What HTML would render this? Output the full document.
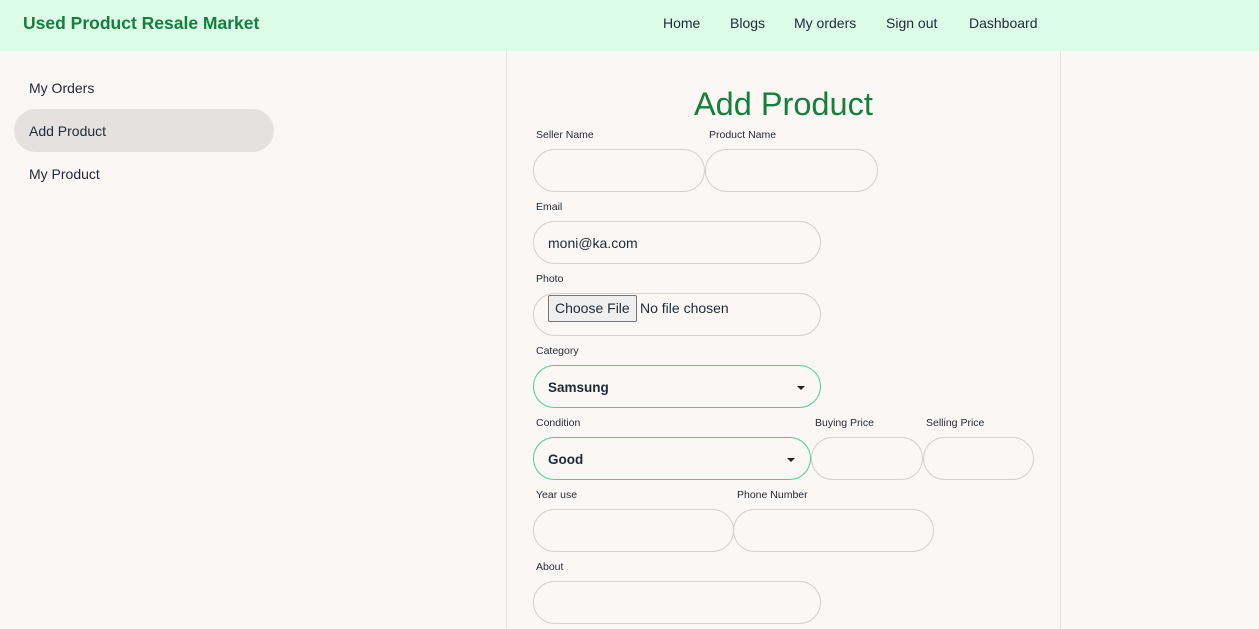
<!DOCTYPE html>
<html><head><style>
*{box-sizing:border-box;margin:0;padding:0}
body{width:1259px;height:629px;overflow:hidden;background:#faf7f5;font-family:"Liberation Sans",sans-serif;color:#1f2937;position:relative}
.nav{position:absolute;left:0;top:0;width:1259px;height:51px;background:#dcfce7}
.brand{position:absolute;left:23px;top:13px;font-size:17.5px;font-weight:bold;color:#15803d}
.links span{position:absolute;top:15px;font-size:14px;color:#1f2937}
.vl{position:absolute;top:51px;width:1px;height:578px;background:#e5e2e0}
.side{position:absolute;left:29px;font-size:14px;color:#1f2937}
.pill{position:absolute;left:14px;top:109px;width:260px;height:43px;border-radius:22px;background:#e5e1e1}
h1{position:absolute;left:694px;top:86px;font-size:32.5px;font-weight:normal;color:#15803d}
.l{position:absolute;font-size:10.5px;color:#1f2937;margin-top:1px}
.i{position:absolute;height:43px;border:1px solid #d4d0cd;border-radius:22px;font-size:14px;padding-left:14px;line-height:43px}
.s{border-color:#4ccf93;font-weight:bold;font-size:13.5px}
.s:after{content:"";position:absolute;right:15px;top:20px;border:4px solid transparent;border-top:4px solid #222;border-bottom:0}
.btn{position:absolute;left:14px;top:1px;height:27px;padding:0 6px;border:1px solid #767676;background:#efefef;line-height:25px;font-size:14px;border-radius:2px}
</style></head><body>
<div class="nav"><div class="brand">Used Product Resale Market</div>
<div class="links"><span style="left:663px">Home</span><span style="left:730px">Blogs</span><span style="left:794px">My orders</span><span style="left:886px">Sign out</span><span style="left:969px">Dashboard</span></div></div>
<div class="vl" style="left:506px"></div><div class="vl" style="left:1060px"></div>
<div class="pill"></div>
<div class="side" style="top:80px">My Orders</div>
<div class="side" style="top:123px">Add Product</div>
<div class="side" style="top:166px">My Product</div>
<h1>Add Product</h1>
<div class="l" style="left:536px;top:128px">Seller Name</div>
<div class="l" style="left:709px;top:128px">Product Name</div>
<div class="i" style="left:533px;top:149px;width:172px"></div>
<div class="i" style="left:705px;top:149px;width:173px"></div>
<div class="l" style="left:536px;top:200px">Email</div>
<div class="i" style="left:533px;top:221px;width:288px">moni@ka.com</div>
<div class="l" style="left:536px;top:272px">Photo</div>
<div class="i" style="left:533px;top:293px;width:288px"><span class="btn">Choose File</span><span style="position:absolute;left:106px;top:-7px">No file chosen</span></div>
<div class="l" style="left:536px;top:344px">Category</div>
<div class="i s" style="left:533px;top:365px;width:288px">Samsung</div>
<div class="l" style="left:536px;top:416px">Condition</div>
<div class="l" style="left:815px;top:416px">Buying Price</div>
<div class="l" style="left:926px;top:416px">Selling Price</div>
<div class="i s" style="left:533px;top:437px;width:278px">Good</div>
<div class="i" style="left:811px;top:437px;width:112px"></div>
<div class="i" style="left:923px;top:437px;width:111px"></div>
<div class="l" style="left:536px;top:488px">Year use</div>
<div class="l" style="left:737px;top:488px">Phone Number</div>
<div class="i" style="left:533px;top:509px;width:201px"></div>
<div class="i" style="left:733px;top:509px;width:201px"></div>
<div class="l" style="left:536px;top:560px">About</div>
<div class="i" style="left:533px;top:581px;width:288px"></div>
</body></html>
